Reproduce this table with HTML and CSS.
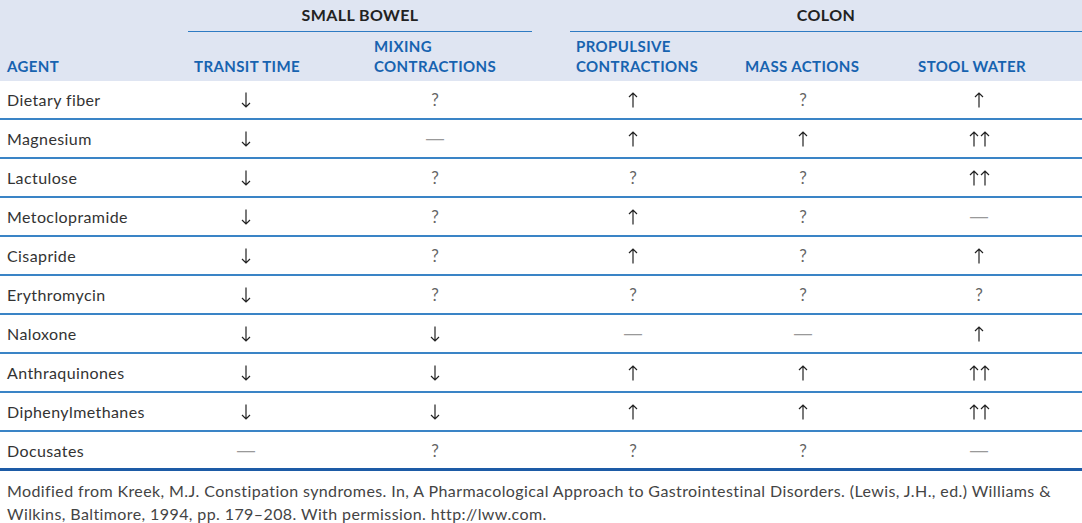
FILE: index.html
```html
<!DOCTYPE html>
<html lang="en">
<head>
<meta charset="utf-8">
<title>Agents and intestinal motility</title>
<link rel="stylesheet" href="styles.css">
</head>
<body>
<svg class="defs" width="0" height="0" aria-hidden="true">
  <defs>
    <symbol id="up" viewBox="0 0 10 16"><path d="M5 15.5V1M1 5L5 1l4 4" fill="none" stroke="#222" stroke-width="1.2"/></symbol>
    <symbol id="down" viewBox="0 0 10 16"><path d="M5 0.5V15M1 11l4 4 4-4" fill="none" stroke="#222" stroke-width="1.2"/></symbol>
  </defs>
</svg>
<div class="table">
  <div class="head">
    <div class="groups">
      <div class="group sb">SMALL BOWEL</div>
      <div class="group colon">COLON</div>
    </div>
    <div class="cols">
      <div class="ch">AGENT</div>
      <div class="ch">TRANSIT TIME</div>
      <div class="ch">MIXING<br>CONTRACTIONS</div>
      <div class="ch">PROPULSIVE<br>CONTRACTIONS</div>
      <div class="ch">MASS ACTIONS</div>
      <div class="ch">STOOL WATER</div>
    </div>
  </div>

  <div class="row">
    <div class="name">Dietary fiber</div>
    <div class="v"><svg class="ar"><use href="#down"/></svg></div>
    <div class="v q">?</div>
    <div class="v"><svg class="ar"><use href="#up"/></svg></div>
    <div class="v q">?</div>
    <div class="v"><svg class="ar"><use href="#up"/></svg></div>
  </div>
  <div class="row">
    <div class="name">Magnesium</div>
    <div class="v"><svg class="ar"><use href="#down"/></svg></div>
    <div class="v d">—</div>
    <div class="v"><svg class="ar"><use href="#up"/></svg></div>
    <div class="v"><svg class="ar"><use href="#up"/></svg></div>
    <div class="v"><svg class="ar"><use href="#up"/></svg><svg class="ar"><use href="#up"/></svg></div>
  </div>
  <div class="row">
    <div class="name">Lactulose</div>
    <div class="v"><svg class="ar"><use href="#down"/></svg></div>
    <div class="v q">?</div>
    <div class="v q">?</div>
    <div class="v q">?</div>
    <div class="v"><svg class="ar"><use href="#up"/></svg><svg class="ar"><use href="#up"/></svg></div>
  </div>
  <div class="row">
    <div class="name">Metoclopramide</div>
    <div class="v"><svg class="ar"><use href="#down"/></svg></div>
    <div class="v q">?</div>
    <div class="v"><svg class="ar"><use href="#up"/></svg></div>
    <div class="v q">?</div>
    <div class="v d">—</div>
  </div>
  <div class="row">
    <div class="name">Cisapride</div>
    <div class="v"><svg class="ar"><use href="#down"/></svg></div>
    <div class="v q">?</div>
    <div class="v"><svg class="ar"><use href="#up"/></svg></div>
    <div class="v q">?</div>
    <div class="v"><svg class="ar"><use href="#up"/></svg></div>
  </div>
  <div class="row">
    <div class="name">Erythromycin</div>
    <div class="v"><svg class="ar"><use href="#down"/></svg></div>
    <div class="v q">?</div>
    <div class="v q">?</div>
    <div class="v q">?</div>
    <div class="v q">?</div>
  </div>
  <div class="row">
    <div class="name">Naloxone</div>
    <div class="v"><svg class="ar"><use href="#down"/></svg></div>
    <div class="v"><svg class="ar"><use href="#down"/></svg></div>
    <div class="v d">—</div>
    <div class="v d">—</div>
    <div class="v"><svg class="ar"><use href="#up"/></svg></div>
  </div>
  <div class="row">
    <div class="name">Anthraquinones</div>
    <div class="v"><svg class="ar"><use href="#down"/></svg></div>
    <div class="v"><svg class="ar"><use href="#down"/></svg></div>
    <div class="v"><svg class="ar"><use href="#up"/></svg></div>
    <div class="v"><svg class="ar"><use href="#up"/></svg></div>
    <div class="v"><svg class="ar"><use href="#up"/></svg><svg class="ar"><use href="#up"/></svg></div>
  </div>
  <div class="row">
    <div class="name">Diphenylmethanes</div>
    <div class="v"><svg class="ar"><use href="#down"/></svg></div>
    <div class="v"><svg class="ar"><use href="#down"/></svg></div>
    <div class="v"><svg class="ar"><use href="#up"/></svg></div>
    <div class="v"><svg class="ar"><use href="#up"/></svg></div>
    <div class="v"><svg class="ar"><use href="#up"/></svg><svg class="ar"><use href="#up"/></svg></div>
  </div>
  <div class="row last">
    <div class="name">Docusates</div>
    <div class="v d">—</div>
    <div class="v q">?</div>
    <div class="v q">?</div>
    <div class="v q">?</div>
    <div class="v d">—</div>
  </div>
</div>
<p class="note">Modified from Kreek, M.J. Constipation syndromes. In, A Pharmacological Approach to Gastrointestinal Disorders. (Lewis, J.H., ed.) Williams &amp; Wilkins, Baltimore, 1994, pp. 179–208. With permission. http://lww.com.</p>
</body>
</html>
```

FILE: styles.css
```css
html, body {
  margin: 0;
  padding: 0;
  background: #ffffff;
}
body {
  width: 1082px;
  font-family: "Lato", "Open Sans", sans-serif;
  color: #333;
}
.defs {
  position: absolute;
  width: 0;
  height: 0;
}
.table {
  width: 1082px;
}
.head {
  background: #dfe5f2;
  height: 81px;
  display: flex;
  flex-direction: column;
}
.groups {
  display: grid;
  grid-template-columns: 188px 382px 512px;
  height: 32px;
}
.group {
  font-weight: 700;
  font-size: 16px;
  letter-spacing: 0.4px;
  color: #222;
  text-align: center;
  line-height: 30px;
  border-bottom: 1.5px solid #2e7bc3;
}
.group.sb {
  grid-column: 2;
  margin-right: 38px;
}
.group.colon {
  grid-column: 3;
}
.cols {
  flex: 1;
  display: grid;
  grid-template-columns: 188px 180px 202px 169px 173px 170px;
  align-items: end;
  padding-bottom: 5px;
}
.ch {
  padding-left: 6px;
  font-weight: 700;
  font-size: 15px;
  letter-spacing: 0.4px;
  line-height: 20px;
  color: #1763b0;
}
.ch:first-child {
  padding-left: 7px;
}
.row {
  display: grid;
  grid-template-columns: 188px 180px 202px 169px 173px 170px;
  height: 39px;
  box-sizing: border-box;
  border-bottom: 2px solid #3a84c6;
  align-items: center;
}
.row.last {
  border-bottom: 3px solid #1d5ba6;
}
.name {
  padding-left: 7px;
  font-size: 16px;
  letter-spacing: 0.4px;
  color: #333;
}
.v {
  display: flex;
  justify-content: center;
  align-items: center;
  gap: 1px;
  font-size: 16px;
  height: 100%;
}
.v:nth-child(2) { padding-right: 64px; }
.v:nth-child(3) { padding-right: 68px; }
.v:nth-child(4) { padding-right: 43px; }
.v:nth-child(5) { padding-right: 45px; }
.v:nth-child(6) { padding-right: 36px; }
.ar {
  width: 10px;
  height: 16px;
}
.q {
  color: #666;
  font-size: 17px;
}
.d {
  font-family: "Liberation Sans", sans-serif;
  font-size: 18px;
  color: #999;
}
.note {
  margin: 0;
  padding: 8px 7px 0 7px;
  font-size: 16px;
  letter-spacing: 0.4px;
  line-height: 23px;
  color: #444;
}
```
